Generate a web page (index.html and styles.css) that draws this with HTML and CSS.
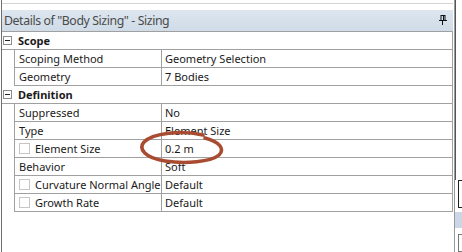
FILE: index.html
```html
<!DOCTYPE html>
<html>
<head>
<meta charset="utf-8">
<link rel="stylesheet" href="styles.css">
</head>
<body>
<div class="screen">
  <div class="panel">
    <div class="topstrip"></div>
    <div class="header">
      <span class="title">Details of "Body Sizing" - Sizing</span>
      <svg class="pin" width="8" height="10" viewBox="0 0 8 10"><rect x="2" y="0.5" width="4" height="5" fill="none" stroke="#111" stroke-width="1"/><rect x="4" y="1" width="1" height="4" fill="#111"/><rect x="0" y="5" width="8" height="1" fill="#111"/><rect x="3" y="6" width="1" height="4" fill="#111"/></svg>
    </div>
    <div class="grid">
      <div class="row cat">
        <span class="exp"><span class="minus"></span></span>
        <span class="catlabel">Scope</span>
      </div>
      <div class="row prop">
        <span class="name">Scoping Method</span>
        <span class="val">Geometry Selection</span>
      </div>
      <div class="row prop">
        <span class="name">Geometry</span>
        <span class="val">7 Bodies</span>
      </div>
      <div class="row cat">
        <span class="exp"><span class="minus"></span></span>
        <span class="catlabel">Definition</span>
      </div>
      <div class="row prop">
        <span class="name">Suppressed</span>
        <span class="val">No</span>
      </div>
      <div class="row prop">
        <span class="name">Type</span>
        <span class="val">Element Size</span>
      </div>
      <div class="row prop">
        <span class="name"><span class="chk"></span>Element Size</span>
        <span class="val">0.2 m</span>
      </div>
      <div class="row prop">
        <span class="name">Behavior</span>
        <span class="val">Soft</span>
      </div>
      <div class="row prop">
        <span class="name"><span class="chk"></span>Curvature Normal Angle</span>
        <span class="val">Default</span>
      </div>
      <div class="row prop">
        <span class="name"><span class="chk"></span>Growth Rate</span>
        <span class="val">Default</span>
      </div>
    </div>
    <svg class="circle" width="90" height="42" viewBox="0 0 90 42">
      <path d="M64 6 C42 1 14 4 5 13 C-1 20 6 29 26 32 C46 35 72 33 80 26 C86 20 81 13 66 9" fill="none" stroke="#a94b30" stroke-width="3.5" stroke-linecap="round"/>
    </svg>
  </div>
  <div class="side">
    <div class="side-a"></div>
    <div class="side-b"></div>
    <div class="side-c"></div>
    <div class="side-d"></div>
  </div>
</div>
</body>
</html>
```
FILE: styles.css
```css
html, body {
  margin: 0;
  padding: 0;
  background: #fff;
}
.screen {
  width: 462px;
  height: 252px;
  overflow: hidden;
  display: flex;
  font-family: "Noto Sans", "Open Sans", sans-serif;
  font-size: 11px;
  color: #1a1a1a;
}
.panel {
  position: relative;
  width: 454px;
  height: 252px;
  margin-left: 1px;
  border-left: 1px solid #6e6e6e;
  box-sizing: border-box;
}
.topstrip {
  height: 10px;
  background: linear-gradient(#fff 0, #fff 3px, #d4d4d4 3px, #d4d4d4 4px, #fff 4px);
}
.header {
  height: 21px;
  display: flex;
  align-items: center;
  justify-content: space-between;
  padding: 0 6px 0 2px;
  background: linear-gradient(#dde6ef, #cfdbe7);
}
.title {
  font-size: 12.3px;
  letter-spacing: -0.4px;
  color: #4a4a4a;
}
.pin {
  display: block;
  margin-top: -1px;
}
.grid {
  width: 450px;
  border-top: 1px solid #a0a0a0;
  border-right: 1px solid #a0a0a0;
}
.row {
  display: flex;
  height: 18px;
  box-sizing: border-box;
  line-height: 17px;
}
.cat {
  border-bottom: 1px solid #a0a0a0;
  align-items: center;
}
.exp {
  width: 12px;
  height: 17px;
  display: flex;
  align-items: center;
  padding-left: 1px;
  box-sizing: border-box;
}
.minus {
  width: 9px;
  height: 9px;
  box-sizing: border-box;
  border: 1px solid #8c8c8c;
  background: #fff;
  position: relative;
}
.minus::after {
  content: "";
  position: absolute;
  left: 1px;
  top: 3px;
  width: 5px;
  height: 1px;
  background: #222;
}
.catlabel {
  font-weight: bold;
  padding-left: 4px;
}
.prop {
  padding-left: 12px;
}
.name {
  width: 148px;
  flex: none;
  border-left: 1px solid #a0a0a0;
  border-right: 1px solid #a0a0a0;
  border-bottom: 1px solid #a0a0a0;
  padding-left: 4px;
  box-sizing: border-box;
  display: flex;
  align-items: center;
  white-space: nowrap;
}
.val {
  flex: 1;
  border-bottom: 1px solid #a0a0a0;
  padding-left: 3px;
  white-space: nowrap;
}
.chk {
  width: 11px;
  height: 11px;
  box-sizing: border-box;
  border: 1px solid #c6c6c6;
  margin-right: 5px;
  flex: none;
}
.circle {
  position: absolute;
  left: 137px;
  top: 129px;
}
.side {
  width: 8px;
  height: 252px;
  display: flex;
  flex-direction: column;
  border-left: 1px solid #9a9a9a;
  margin-left: 1px;
  box-sizing: border-box;
}
.side-a {
  height: 180px;
  border-left: 1px solid #555;
}
.side-b {
  height: 26px;
  margin-left: 3px;
  border: 1px solid #222;
  border-right: 0;
}
.side-c {
  height: 16px;
  margin-top: 4px;
  background: #c9d7e6;
}
.side-d {
  flex: 1;
  margin-top: 6px;
  margin-left: 3px;
  border: 1px solid #777;
  border-right: 0;
}
```
